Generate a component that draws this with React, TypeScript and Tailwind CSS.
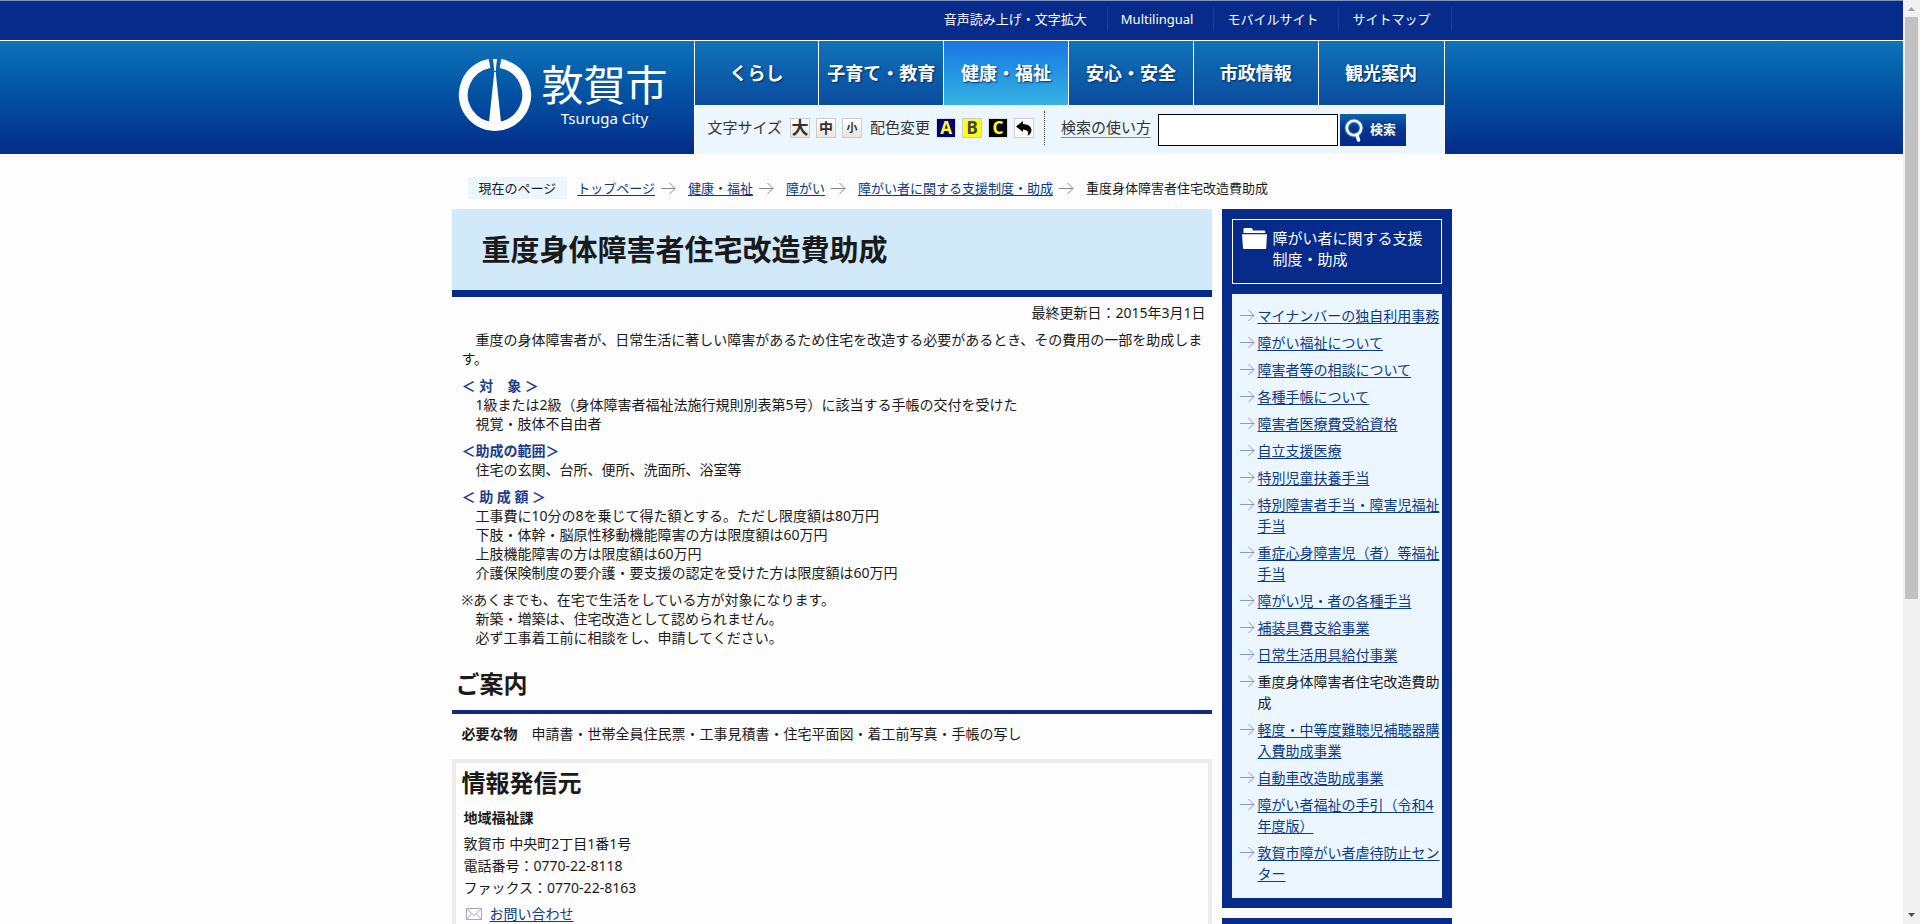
import type { ReactNode } from 'react';
import clsx from 'clsx';

const utilityLinks = ['音声読み上げ・文字拡大', 'Multilingual', 'モバイルサイト', 'サイトマップ'];

const navItems = [
  { label: 'くらし' },
  { label: '子育て・教育' },
  { label: '健康・福祉', active: true },
  { label: '安心・安全' },
  { label: '市政情報' },
  { label: '観光案内' },
];

const crumbs = ['トップページ', '健康・福祉', '障がい', '障がい者に関する支援制度・助成'];

const sideLinks = [
  { label: 'マイナンバーの独自利用事務' },
  { label: '障がい福祉について' },
  { label: '障害者等の相談について' },
  { label: '各種手帳について' },
  { label: '障害者医療費受給資格' },
  { label: '自立支援医療' },
  { label: '特別児童扶養手当' },
  { label: '特別障害者手当・障害児福祉手当' },
  { label: '重症心身障害児（者）等福祉手当' },
  { label: '障がい児・者の各種手当' },
  { label: '補装具費支給事業' },
  { label: '日常生活用具給付事業' },
  { label: '重度身体障害者住宅改造費助成', current: true },
  { label: '軽度・中等度難聴児補聴器購入費助成事業' },
  { label: '自動車改造助成事業' },
  { label: '障がい者福祉の手引（令和4年度版）' },
  { label: '敦賀市障がい者虐待防止センター' },
];

function ArrowIcon({ className }: { className?: string }) {
  return (
    <svg width="15" height="13" viewBox="0 0 15 13" fill="none" stroke="currentColor" className={className} aria-hidden="true">
      <path d="M0 6.500h14M8.500 1l5.500 5.500-5.500 5.500" />
    </svg>
  );
}

function Logo() {
  return (
    <a href="#" className="flex items-start gap-[10px] pt-[17px] text-white">
      <svg width="74" height="74" viewBox="0 0 74 74" aria-hidden="true">
        <path d="M31.500 5.500A31.700 31.700 0 1 0 42.500 5.500" fill="none" stroke="#fff" strokeWidth="9" />
        <path d="M36.300 14h1.400L43.500 69h-13z" fill="#fff" />
        <path d="M35 1h4l-1.300 12h-1.400z" fill="#fff" />
      </svg>
      <span className="flex flex-col items-center pt-1">
        <span className="text-[42px] leading-[46px]">敦賀市</span>
        <span className="text-[15px] leading-5">Tsuruga City</span>
      </span>
    </a>
  );
}

function ToolButton({ className, label, children }: { className: string; label: string; children: ReactNode }) {
  return (
    <button type="button" aria-label={label} className={clsx('flex size-5 items-center justify-center', className)}>
      {children}
    </button>
  );
}

function ToolBar() {
  return (
    <div className="flex h-[49px] items-center bg-[#ebf6fe] pb-1 pl-[13px] text-[15px] text-[#333]">
      <span>文字サイズ</span>
      <div className="mx-2 flex gap-[6px] font-bold">
        <ToolButton label="文字サイズ大" className="border border-[#ccc] bg-linear-to-b from-white to-[#ebe6dc] text-[17px] leading-none">
          大
        </ToolButton>
        <ToolButton label="文字サイズ中" className="border border-[#ccc] bg-linear-to-b from-white to-[#ebe6dc] text-sm leading-none">
          中
        </ToolButton>
        <ToolButton label="文字サイズ小" className="border border-[#ccc] bg-linear-to-b from-white to-[#ebe6dc] text-[11px] leading-none">
          小
        </ToolButton>
      </div>
      <span>配色変更</span>
      <div className="mr-[10px] ml-[6px] flex gap-[6px] text-[17px] leading-none font-bold">
        <ToolButton label="配色A" className="border border-[#ddd] bg-[#000078] text-[#ffff1e]">
          A
        </ToolButton>
        <ToolButton label="配色B" className="border border-[#ccc] bg-[#ffff14] text-[#444]">
          B
        </ToolButton>
        <ToolButton label="配色C" className="border border-[#ddd] bg-black text-[#ffff1e]">
          C
        </ToolButton>
        <ToolButton label="配色を元に戻す" className="border border-[#ccc] bg-white">
          <svg width="16" height="16" viewBox="0 0 16 16" aria-hidden="true">
            <path d="M0 6.500L7 1v3c5 .3 8.500 2.500 8.500 6.200 0 2.300-1.500 4.300-4 5.600 1.600-3.300.5-6-4.500-6.300V12z" fill="#000" />
          </svg>
        </ToolButton>
      </div>
      <div className="h-[34px] border-l border-dotted border-[#333]" />
      <a href="#" className="mr-[7px] ml-4 border-b border-[#888] leading-5">
        検索の使い方
      </a>
      <form className="flex gap-[2px] pt-1" onSubmit={(e) => e.preventDefault()}>
        <input type="text" aria-label="サイト内検索" className="h-8 w-[180px] border border-black bg-white px-1" />
        <button
          type="submit"
          className="flex h-8 w-[66px] items-center gap-1 bg-linear-to-b from-[#0e62ac] via-[#08308c] to-[#062b8a] pl-1 text-[13px] font-bold text-white"
        >
          <svg width="22" height="24" viewBox="0 0 22 24" fill="none" stroke="#fff" aria-hidden="true">
            <circle cx="10" cy="10" r="7.200" strokeWidth="5" stroke="#3b9be0" opacity=".5" />
            <circle cx="10" cy="10" r="7.200" strokeWidth="2.600" />
            <path d="M13 17l1.500 5" strokeWidth="3.500" strokeLinecap="round" />
          </svg>
          検索
        </button>
      </form>
    </div>
  );
}

function Header() {
  return (
    <header>
      <div className="h-10 border-t border-[#7f93c4] bg-[#062b8a]">
        <ul className="mx-auto flex max-w-[1000px] justify-end pt-[6px] text-[13px] text-white">
          {utilityLinks.map((label) => (
            <li key={label} className="border-r border-[#1d409b] pr-5 pl-[13px] leading-6">
              <a href="#">{label}</a>
            </li>
          ))}
        </ul>
      </div>
      <div className="border-t border-white bg-linear-to-b from-[#1072b8] to-[#062b8a]">
        <div className="mx-auto flex max-w-[1000px] justify-between pr-[7px] pl-[6px]">
          <Logo />
          <div className="w-[751px] border-x border-white">
            <ul className="grid grid-cols-6 divide-x divide-white text-lg font-bold text-white">
              {navItems.map(({ label, active }) => (
                <li key={label}>
                  <a
                    href="#"
                    className={clsx(
                      'flex h-16 items-center justify-center bg-linear-to-b text-shadow-[1px_1px_2px_#032a66]',
                      active ? 'from-[#1b76e4] to-[#36b2e0]' : 'from-[#1072b8] to-[#0b4c9f]'
                    )}
                  >
                    {label}
                  </a>
                </li>
              ))}
            </ul>
            <ToolBar />
          </div>
        </div>
      </div>
    </header>
  );
}

function Breadcrumb() {
  return (
    <nav aria-label="現在のページ" className="mt-[23px] mb-[10px] flex h-[22px] items-center pl-4 text-[13px]">
      <span className="mr-[10px] bg-[#ebf6fe] px-[11px] leading-[22px]">現在のページ</span>
      {crumbs.map((label) => (
        <span key={label} className="flex items-center">
          <a href="#" className="text-[#0b3a8c] underline underline-offset-2">
            {label}
          </a>
          <ArrowIcon className="mr-3 ml-[6px] text-[#888]" />
        </span>
      ))}
      <span>重度身体障害者住宅改造費助成</span>
    </nav>
  );
}

// Full-width space used to indent body lines by one character
const INDENT = '\u3000';

function Article() {
  return (
    <main className="min-w-0 flex-1">
      <h1 className="border-b-[7px] border-[#062b8a] bg-[#d2e9f9] px-[30px] py-5 text-[29px] leading-[41px] font-bold">
        重度身体障害者住宅改造費助成
      </h1>
      <p className="mt-[6px] pr-[6px] text-right leading-[19px]">最終更新日：2015年3月1日</p>
      <div className="mt-2 flex flex-col gap-2 pl-[10px] leading-[19px]">
        <p>
          {INDENT}重度の身体障害者が、日常生活に著しい障害があるため住宅を改造する必要があるとき、その費用の一部を助成します。
        </p>
        <p>
          <strong className="text-[#1c3c8c]">＜ 対　象 ＞</strong>
          <br />
          {INDENT}1級または2級（身体障害者福祉法施行規則別表第5号）に該当する手帳の交付を受けた
          <br />
          {INDENT}視覚・肢体不自由者
        </p>
        <p>
          <strong className="text-[#1c3c8c]">＜助成の範囲＞</strong>
          <br />
          {INDENT}住宅の玄関、台所、便所、洗面所、浴室等
        </p>
        <p>
          <strong className="text-[#1c3c8c]">＜ 助 成 額 ＞</strong>
          <br />
          {INDENT}工事費に10分の8を乗じて得た額とする。ただし限度額は80万円
          <br />
          {INDENT}下肢・体幹・脳原性移動機能障害の方は限度額は60万円
          <br />
          {INDENT}上肢機能障害の方は限度額は60万円
          <br />
          {INDENT}介護保険制度の要介護・要支援の認定を受けた方は限度額は60万円
        </p>
        <p>
          ※あくまでも、在宅で生活をしている方が対象になります。
          <br />
          {INDENT}新築・増築は、住宅改造として認められません。
          <br />
          {INDENT}必ず工事着工前に相談をし、申請してください。
        </p>
      </div>
      <h2 className="mt-[19px] border-b-4 border-[#12297c] pb-2 pl-1 text-2xl leading-9 font-bold">ご案内</h2>
      <p className="mt-[10px] px-[10px] leading-[19px]">
        <strong>必要な物</strong>　申請書・世帯全員住民票・工事見積書・住宅平面図・着工前写真・手帳の写し
      </p>
      <section className="mt-4 border-4 border-[#ededed] px-[6px] pb-4 leading-[22px]">
        <h2 className="text-2xl leading-10 font-bold">情報発信元</h2>
        <div className="pl-[2px]">
          <h3 className="my-1 font-bold">地域福祉課</h3>
          <p>敦賀市 中央町2丁目1番1号</p>
          <p>電話番号：0770-22-8118</p>
          <p>ファックス：0770-22-8163</p>
          <p className="mt-1 flex items-center gap-2 pl-[2px]">
            <svg width="16" height="12" viewBox="0 0 16 12" fill="none" stroke="#a8a8c0" aria-hidden="true">
              <path d="M.5.500h15v11H.5zM.5.500L8 7.500l7.500-7M.5 11.500l5.500-6M15.500 11.500L10 5.500" />
            </svg>
            <a href="#" className="text-[#0b3a8c] underline underline-offset-2">
              お問い合わせ
            </a>
          </p>
        </div>
      </section>
    </main>
  );
}

function Sidebar() {
  return (
    <aside className="flex w-[230px] shrink-0 flex-col gap-[10px]">
      <div className="flex flex-col gap-[10px] bg-[#062b8a] p-[10px]">
        <h2 className="flex h-[65px] gap-[6px] border border-white pt-2 pr-3 pl-[9px] text-[15px] leading-[21px] text-white">
          <svg width="25" height="21" viewBox="0 0 25 21" fill="#fff" className="shrink-0" aria-hidden="true">
            <path d="M1.500 5V1.200Q1.500 0 2.700 0h7l1.500 2.500h11q1 0 1 1V5z" />
            <path d="M0 6.200h25l-.8 13.800q0 1-1 1H2q-1 0-1-1z" />
          </svg>
          <a href="#">障がい者に関する支援制度・助成</a>
        </h2>
        <ul className="flex flex-col gap-[6px] bg-[#ebf6fe] pt-[11px] pb-[14px] pl-2 leading-[21px]">
          {sideLinks.map(({ label, current }) => (
            <li key={label} className="flex gap-[3px]">
              <ArrowIcon className="mt-1 shrink-0 text-[#8c94d4]" />
              {current ? (
                <span>{label}</span>
              ) : (
                <a href="#" className="text-[#0b3a8c] underline underline-offset-2">
                  {label}
                </a>
              )}
            </li>
          ))}
        </ul>
      </div>
      <div className="h-10 bg-[#062b8a]" />
    </aside>
  );
}

function ScrollTrack() {
  return (
    <div className="flex w-[17px] shrink-0 flex-col items-center bg-[#f1f1f1]" aria-hidden="true">
      <svg width="17" height="17" viewBox="0 0 17 17" className="shrink-0">
        <path d="M5 11l3.500-4L12 11z" fill="#a3a3a3" />
      </svg>
      <div className="h-[63%] w-[13px] bg-[#c1c1c1]" />
      <svg width="17" height="17" viewBox="0 0 17 17" className="mt-auto shrink-0">
        <path d="M5 6l3.500 4L12 6z" fill="#505050" />
      </svg>
    </div>
  );
}

export default function App() {
  return (
    <div
      lang="ja"
      className="flex h-screen overflow-hidden bg-[#fdfdfd] font-['Noto_Sans','Noto_Sans_CJK_JP',sans-serif] text-sm text-[#1a1a1a]"
    >
      <div className="min-w-0 flex-1 overflow-hidden">
        <Header />
        <div className="mx-auto max-w-[1000px]">
          <Breadcrumb />
          <div className="flex items-start gap-[10px]">
            <Article />
            <Sidebar />
          </div>
        </div>
      </div>
      <ScrollTrack />
    </div>
  );
}
